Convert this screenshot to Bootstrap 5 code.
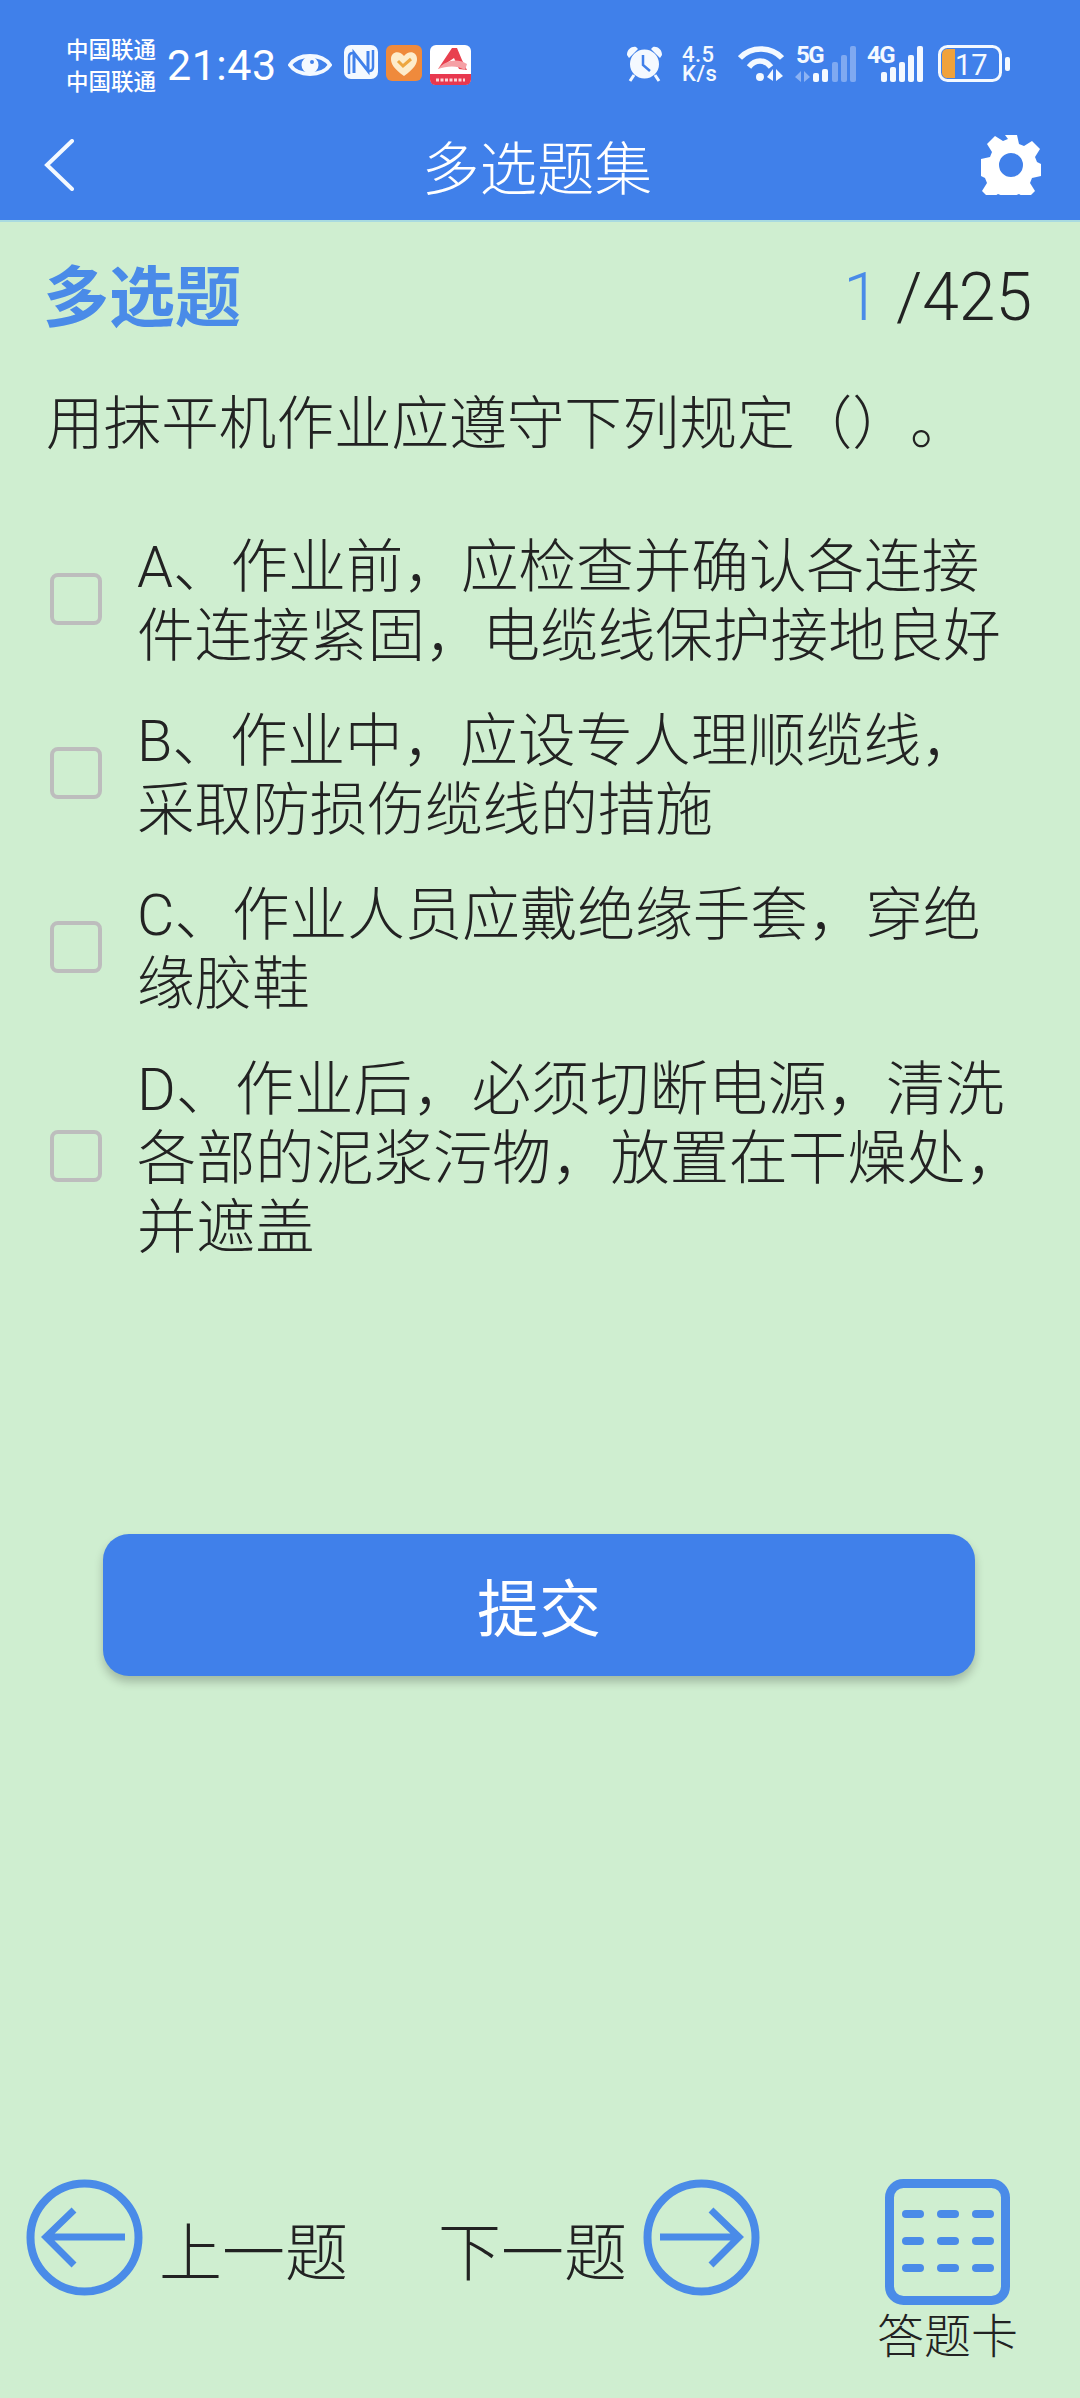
<!DOCTYPE html>
<html lang="zh-CN">
<head>
  <meta charset="UTF-8">
  <meta name="viewport" content="width=device-width, initial-scale=1.0">
  <title>多选题集</title>
  <link href="https://cdn.jsdelivr.net/npm/bootstrap@5.3.3/dist/css/bootstrap.min.css" rel="stylesheet">
  <style>
    body {
      background-color: #cfeed0;
      font-family: "Noto Sans CJK SC", "Noto Sans", sans-serif;
      color: #222;
      text-spacing-trim: space-all;
    }
    .page-box { height: 2398px; }
    .top-blue { background-color: #4080ea; height: 222px; color: #fff; border-bottom: 2px solid #a9dbe0; }
    .status-row { height: 130px; padding: 45px 69px 0 66px; }
    .carrier { font-size: 22.5px; line-height: 32px; width: 101px; font-weight: 500; margin-top: -13px; }
    .clock { font-family: Roboto, sans-serif; font-size: 43px; line-height: 40px; width: 121px; letter-spacing: .5px; }
    .speed-text { font-family: Roboto, sans-serif; font-size: 22px; line-height: 19px; font-weight: 500; width: 38px; color: #f4f9ff; margin: 0 18px 0 19px; letter-spacing: .5px; }
    .net-icon { margin-top: -8px; }
    .gap-s { margin-left: 11px; }
    .gap-m { margin-left: 10px; }
    .gap-l { margin-left: 15px; }
    .eye-icon { margin: 5px 12px 0 0; }
    .title-row { height: 88px; padding: 0 39px 0 33px; margin-top: -9px; }
    .back-wrap { width: 60px; padding-left: 11px; }
    .top-title { font-size: 57.6px; line-height: 70px; font-weight: 300; }
    .type-title { font-size: 66px; font-weight: 700; line-height: 76px; color: #4a8be8; margin-left: -3px; }
    .count-text { font-family: Roboto, sans-serif; font-size: 66px; line-height: 76px; margin: 6px 3px -6px 0; font-weight: 300; }
    .count-now { color: #4a8be8; }
    .content-box { padding: 32px 45px 0 46px; }
    .question-text { font-size: 57.6px; line-height: 70px; margin-top: 54px; font-weight: 300; }
    .option-list { margin-top: 76px; gap: 36px; }
    .option-text { font-size: 57.6px; line-height: 69px; font-family: Roboto, "Noto Sans CJK SC", sans-serif; margin: 3px 0 -3px 35px; font-weight: 300; white-space: nowrap; }
    .option-wide { font-size: 59.2px; }
    .form-check-input.option-box {
      width: 52px; height: 52px; margin: 0 0 0 4px; flex: none;
      background-color: transparent; border: 4px solid #bdbdbd; border-radius: 8px;
    }
    .submit-btn {
      display: block; width: 872px; height: 142px; margin: 275px 0 0 57px;
      background-color: #4080ea; border: 0; border-radius: 26px;
      color: #fff; font-size: 62px; box-shadow: 0 6px 10px rgba(0, 0, 0, .22);
    }
    .foot-row { padding: 0 62px 37px 26px; }
    .next-group { margin-right: 27px; }
    .foot-text { font-size: 63px; line-height: 74px; font-weight: 300; }
    .card-label { font-size: 47px; line-height: 56px; font-weight: 300; }
  </style>
</head>
<body>
  <div class="page-box d-flex flex-column">
    <div class="top-blue">
      <div class="status-row d-flex align-items-start">
        <div class="carrier">中国联通<br>中国联通</div>
        <div class="clock">21:43</div>
        <svg width="44" height="30" viewBox="0 0 44 30" class="eye-icon"><path d="M2 15C10 3 34 3 42 15C34 27 10 27 2 15Z" fill="none" stroke="#f4f9ff" stroke-width="4"/><circle cx="22" cy="15" r="8.500" fill="#f4f9ff"/><circle cx="24" cy="12" r="2" fill="#4080ea"/></svg>
        <svg width="34" height="34" viewBox="0 0 34 34"><rect width="34" height="34" rx="7" fill="#f4f9ff"/><path d="M9 8C6 8 5 10 5 12V29M25 26C28 26 29 24 29 22V5" fill="none" stroke="#4080ea" stroke-width="2.500"/><path d="M10 28V8L24 26V6" fill="none" stroke="#4080ea" stroke-width="3"/></svg>
        <svg width="36" height="36" viewBox="0 0 36 36" class="ms-2 mt-0"><rect width="36" height="36" rx="6" fill="#ef8a3c"/><path d="M18 31C8 24 5 19 5 14C5 6 14 5 18 11C22 5 31 6 31 14C31 19 28 24 18 31Z" fill="#fdeccb"/><path d="M12 16l5 5 8-7" fill="none" stroke="#eda63f" stroke-width="3"/></svg>
        <svg width="41" height="40" viewBox="0 0 41 40" class="ms-2"><rect width="41" height="40" rx="6" fill="#fff"/><path d="M0 29H41V34C41 37 39 40 36 40H5C2 40 0 37 0 34Z" fill="#e8384f"/><path d="M6 35H35" stroke="#fbd5d8" stroke-width="3" stroke-dasharray="3 1.500"/><path d="M8 24L22 3H27L32 15L37 25L29 24L24 13Z" fill="#e8404f"/><path d="M8 24C16 15 27 13 37 19L35 25C27 20 17 21 8 24Z" fill="#f5a0a5"/></svg>
        <div class="flex-grow-1"></div>
        <svg width="37" height="37" viewBox="0 0 37 37"><path d="M1 10C1 4 6 1 10 2L12 4L3 13ZM36 10C36 4 31 1 27 2L25 4L34 13Z" fill="#f4f9ff"/><circle cx="18.500" cy="19" r="14.500" fill="#f4f9ff"/><path d="M17 10V20L24 26" fill="none" stroke="#4080ea" stroke-width="2.500"/><path d="M8 30L4 36M29 30L33 36" stroke="#f4f9ff" stroke-width="3"/></svg>
        <div class="speed-text">4.5<br>K/s</div>
        <svg width="46" height="36" viewBox="0 0 46 36"><path d="M2 13C13 1 33 1 44 13" fill="none" stroke="#f4f9ff" stroke-width="5.500"/><path d="M11 22C17 14 27 14 33 22" fill="none" stroke="#f4f9ff" stroke-width="5.500"/><circle cx="22" cy="32" r="4" fill="#f4f9ff"/><path d="M35 24V36L29 32ZM38 24V36L45 31Z" fill="#f4f9ff"/></svg>
        <svg width="62" height="46" viewBox="0 -8 62 46" class="gap-s net-icon"><text x="1" y="18" font-family="Roboto, sans-serif" font-size="24" font-weight="700" letter-spacing="-1.500" fill="#f4f9ff">5G</text><path d="M6 26V37L0 32ZM9 26V37L15 32Z" fill="#8db3f3"/><g fill="#f4f9ff"><rect x="18" y="28" width="6" height="9" rx="2"/><rect x="27" y="24" width="6" height="13" rx="2"/></g><g fill="#7fa9f1"><rect x="37" y="17" width="6" height="20" rx="2"/><rect x="46" y="10" width="6" height="27" rx="2"/><rect x="55" y="1" width="6" height="36" rx="2"/></g></svg>
        <svg width="56" height="46" viewBox="0 -8 56 46" class="gap-m net-icon"><text x="0" y="18" font-family="Roboto, sans-serif" font-size="24" font-weight="700" letter-spacing="-1.500" fill="#f4f9ff">4G</text><g fill="#f4f9ff"><rect x="14" y="27" width="6" height="10" rx="2"/><rect x="23" y="22" width="6" height="15" rx="2"/><rect x="32" y="17" width="6" height="20" rx="2"/><rect x="41" y="10" width="6" height="27" rx="2"/><rect x="50" y="1" width="6" height="36" rx="2"/></g></svg>
        <svg width="73" height="38" viewBox="0 0 73 38" class="gap-l"><rect x="1.500" y="1.500" width="61" height="34" rx="8" fill="none" stroke="#f4f9ff" stroke-width="3"/><path d="M4 10C4 6 6 4 10 4H17V33H10C6 33 4 31 4 27Z" fill="#f0a23c"/><rect x="67" y="12" width="5" height="14" rx="2" fill="#f4f9ff"/><text x="17" y="30" font-family="Roboto, sans-serif" font-size="29" fill="#f4f9ff">17</text></svg>
      </div>
      <div class="title-row d-flex align-items-center justify-content-between">
        <div class="back-wrap"><svg width="30" height="52" viewBox="0 0 30 52" class="d-block"><path d="M28 2L3 26L28 50" fill="none" stroke="#f4f9ff" stroke-width="4" stroke-linecap="round"/></svg></div>
        <div class="top-title">多选题集</div>
        <svg width="60" height="60" viewBox="0 0 60 60"><path fill="#fff" fill-rule="evenodd" d="M24 0h12l2 9 5 2 8-5 8 8-5 8 2 5 4 2v12l-9 2-2 5 5 8-8 8-8-5-5 2-2 9H24l-2-9-5-2-8 5-8-8 5-8-2-5-4-2V24l9-2 2-5-5-8 8-8 8 5 5-2ZM30 18a12 12 0 1 0 0 24a12 12 0 1 0 0-24Z"/></svg>
      </div>
    </div>

    <div class="content-box flex-grow-1">
      <div class="d-flex justify-content-between align-items-center">
        <div class="type-title">多选题</div>
        <div class="count-text"><span class="count-now">1</span> /425</div>
      </div>
      <div class="question-text">用抹平机作业应遵守下列规定（）。</div>
      <div class="option-list d-flex flex-column">
        <div class="d-flex align-items-center">
          <input class="form-check-input option-box" type="checkbox">
          <div class="option-text">A、作业前，应检查并确认各连接<br>件连接紧固，电缆线保护接地良好</div>
        </div>
        <div class="d-flex align-items-center">
          <input class="form-check-input option-box" type="checkbox">
          <div class="option-text">B、作业中，应设专人理顺缆线，<br>采取防损伤缆线的措施</div>
        </div>
        <div class="d-flex align-items-center">
          <input class="form-check-input option-box" type="checkbox">
          <div class="option-text">C、作业人员应戴绝缘手套，穿绝<br>缘胶鞋</div>
        </div>
        <div class="d-flex align-items-center">
          <input class="form-check-input option-box" type="checkbox">
          <div class="option-text option-wide">D、作业后，必须切断电源，清洗<br>各部的泥浆污物，放置在干燥处，<br>并遮盖</div>
        </div>
      </div>
      <button type="button" class="btn submit-btn">提交</button>
    </div>

    <div class="foot-row d-flex align-items-start justify-content-between">
      <div class="d-flex align-items-start gap-3">
        <svg width="117" height="117" viewBox="0 0 117 117"><circle cx="58.500" cy="58.500" r="54" fill="none" stroke="#4a8be8" stroke-width="8"/><path d="M99 58H22M48 31L20 58L48 86" fill="none" stroke="#4a8be8" stroke-width="7"/></svg>
        <div class="foot-text mt-4 pt-2">上一题</div>
      </div>
      <div class="next-group d-flex align-items-start gap-3">
        <div class="foot-text mt-4 pt-2">下一题</div>
        <svg width="117" height="117" viewBox="0 0 117 117"><circle cx="58.500" cy="58.500" r="54" fill="none" stroke="#4a8be8" stroke-width="8"/><path d="M17 58H94M68 31L96 58L68 86" fill="none" stroke="#4a8be8" stroke-width="7"/></svg>
      </div>
      <div class="d-flex flex-column align-items-center">
        <svg width="125" height="126" viewBox="0 0 125 126"><rect x="4.500" y="4.500" width="116" height="117" rx="14" fill="none" stroke="#4a8be8" stroke-width="9"/><g fill="#4a8be8"><rect x="17" y="31" width="22" height="8" rx="4"/><rect x="52" y="31" width="22" height="8" rx="4"/><rect x="87" y="31" width="22" height="8" rx="4"/><rect x="17" y="58" width="22" height="8" rx="4"/><rect x="52" y="58" width="22" height="8" rx="4"/><rect x="87" y="58" width="22" height="8" rx="4"/><rect x="17" y="85" width="22" height="8" rx="4"/><rect x="52" y="85" width="22" height="8" rx="4"/><rect x="87" y="85" width="22" height="8" rx="4"/></g></svg>
        <div class="card-label">答题卡</div>
      </div>
    </div>
  </div>
  <script src="https://cdn.jsdelivr.net/npm/bootstrap@5.3.3/dist/js/bootstrap.bundle.min.js"></script>
</body>
</html>
